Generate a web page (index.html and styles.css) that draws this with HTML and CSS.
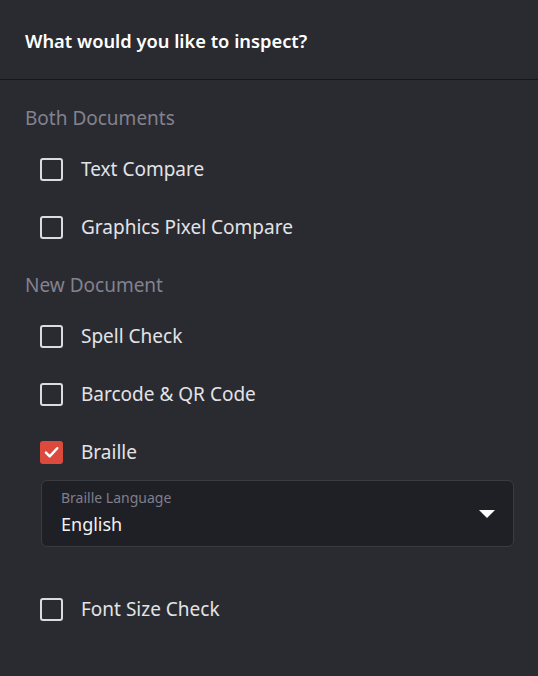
FILE: index.html
```html
<!DOCTYPE html>
<html lang="en">

<head>
    <meta charset="UTF-8">
    <meta name="viewport" content="width=device-width, initial-scale=1.0">
    <title>Inspect</title>
    <link rel="stylesheet" href="styles.css">
</head>

<body>
    <div class="panel">
        <div class="panel-header">
            <h1>What would you like to inspect?</h1>
        </div>

        <div class="panel-body">
            <div class="section">
                <h2 class="section-title">Both Documents</h2>
                <label class="option">
                    <span class="box"></span>
                    <span class="option-text">Text Compare</span>
                </label>
                <label class="option">
                    <span class="box"></span>
                    <span class="option-text">Graphics Pixel Compare</span>
                </label>
            </div>

            <div class="section">
                <h2 class="section-title">New Document</h2>
                <label class="option">
                    <span class="box"></span>
                    <span class="option-text">Spell Check</span>
                </label>
                <label class="option">
                    <span class="box"></span>
                    <span class="option-text">Barcode &amp; QR Code</span>
                </label>
                <label class="option">
                    <span class="box checked">
                        <svg viewBox="0 0 24 24" width="24" height="24">
                            <path d="M6.2 12.6l3.9 3.9 7.9-8.4" fill="none" stroke="#fff" stroke-width="2.6" stroke-linecap="round" stroke-linejoin="round"/>
                        </svg>
                    </span>
                    <span class="option-text">Braille</span>
                </label>

                <div class="select">
                    <div class="select-value">
                        <span class="select-label">Braille Language</span>
                        <span class="select-text">English</span>
                    </div>
                    <span class="caret"></span>
                </div>

                <label class="option option-last">
                    <span class="box"></span>
                    <span class="option-text">Font Size Check</span>
                </label>
            </div>
        </div>
    </div>
</body>

</html>
```

FILE: styles.css
```css
body {
    margin: 0;
    background-color: #2a2b31;
    font-family: "Noto Sans", "Open Sans", sans-serif;
    color: #e3e3e6;
}

.panel {
    width: 538px;
    min-height: 676px;
    background-color: #2a2b31;
}

.panel-header {
    height: 79px;
    display: flex;
    align-items: center;
    padding: 0 25px;
    border-bottom: 1px solid #17181b;
}

.panel-header h1 {
    margin: 0;
    margin-top: 1px;
    font-size: 18.3px;
    font-weight: 600;
    color: #ffffff;
}

.panel-body {
    padding: 9px 25px 0 25px;
}

.section {
    margin-top: 11px;
}

.section-title {
    margin: 0 0 4px 0;
    line-height: 36px;
    font-size: 19px;
    font-weight: 400;
    color: #83828f;
}

.option {
    height: 58px;
    display: flex;
    align-items: center;
    padding-left: 15px;
}

.box {
    width: 19px;
    height: 19px;
    border: 2px solid #dcdcde;
    border-radius: 3px;
    margin-right: 18px;
    display: flex;
    align-items: center;
    justify-content: center;
}

.box.checked {
    width: 23px;
    height: 23px;
    border: none;
    background-color: #dc4a3e;
}

.box svg {
    width: 24px;
    height: 24px;
}

.option-text {
    font-size: 19px;
    color: #e3e3e6;
}

.select {
    margin-left: 16px;
    margin-top: -1px;
    width: 434px;
    height: 65px;
    background-color: #1f2025;
    border: 1px solid #3b3c42;
    border-radius: 6px;
    display: flex;
    align-items: center;
    justify-content: space-between;
    padding: 0 18px 0 19px;
}

.select-value {
    display: flex;
    flex-direction: column;
}

.select-label {
    font-size: 14px;
    color: #7f7e8c;
    line-height: 18px;
    margin-top: 1px;
}

.select-text {
    font-size: 18px;
    color: #f2f2f4;
    line-height: 30px;
    margin-top: 2px;
}

.caret {
    width: 0;
    height: 0;
    border-left: 8px solid transparent;
    border-right: 8px solid transparent;
    border-top: 8px solid #ffffff;
    margin-top: 1px;
}

.option-last {
    margin-top: 33px;
}
```
